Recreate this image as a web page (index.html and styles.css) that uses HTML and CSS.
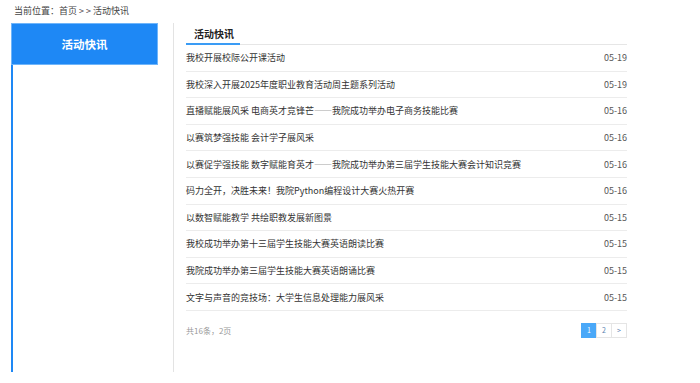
FILE: index.html
```html
<!DOCTYPE html>
<html lang="zh">
<head>
<meta charset="utf-8">
<link rel="stylesheet" href="styles.css">
</head>
<body>
<div class="wrap">
  <div class="crumb">当前位置：<a>首页</a> &gt; &gt; <a>活动快讯</a></div>
  <div class="content">
    <aside class="side">
      <div class="side-head">活动快讯</div>
    </aside>
    <main class="main">
      <div class="tabs"><span class="tab">活动快讯</span></div>
      <ul class="list">
        <li><span class="t">我校开展校际公开课活动</span><span class="d">05-19</span></li>
        <li><span class="t">我校深入开展2025年度职业教育活动周主题系列活动</span><span class="d">05-19</span></li>
        <li><span class="t">直播赋能展风采 电商英才竞锋芒——我院成功举办电子商务技能比赛</span><span class="d">05-16</span></li>
        <li><span class="t">以赛筑梦强技能 会计学子展风采</span><span class="d">05-16</span></li>
        <li><span class="t">以赛促学强技能 数字赋能育英才——我院成功举办第三届学生技能大赛会计知识竞赛</span><span class="d">05-16</span></li>
        <li><span class="t">码力全开，决胜未来！我院Python编程设计大赛火热开赛</span><span class="d">05-16</span></li>
        <li><span class="t">以数智赋能教学 共绘职教发展新图景</span><span class="d">05-15</span></li>
        <li><span class="t">我校成功举办第十三届学生技能大赛英语朗读比赛</span><span class="d">05-15</span></li>
        <li><span class="t">我院成功举办第三届学生技能大赛英语朗诵比赛</span><span class="d">05-15</span></li>
        <li><span class="t">文字与声音的竞技场：大学生信息处理能力展风采</span><span class="d">05-15</span></li>
      </ul>
      <div class="foot">
        <span class="total">共16条，2页</span>
        <div class="pager">
          <span class="pg on">1</span><span class="pg">2</span><span class="pg">&gt;</span>
        </div>
      </div>
    </main>
  </div>
</div>
</body>
</html>
```

FILE: styles.css
```css
* { box-sizing: border-box; }
html, body { margin: 0; padding: 0; background: #fff; }
body {
  font-family: "Noto Sans CJK SC", "Noto Sans", sans-serif;
  color: #333;
  font-size: 9px;
}
.wrap { padding-left: 11px; width: 627px; }
.crumb {
  height: 23px;
  line-height: 21px;
  padding-left: 3px;
  color: #444;
  font-size: 9px;
}
.content { display: flex; height: 349px; }
.side {
  width: 147px;
  flex: none;
  border-left: 2px solid #1e88f5;
}
.side-head {
  height: 42px;
  margin-left: -2px;
  background: #1e88f5;
  box-shadow: 0 0 0 1px #6fb5fa inset;
  color: #fff;
  font-weight: bold;
  font-size: 11.5px;
  display: flex;
  align-items: center;
  justify-content: center;
}
.main {
  flex: 1;
  margin-left: 15px;
  border-left: 1px solid #e3e3e3;
  padding-left: 12px;
}
.tabs {
  height: 22px;
  border-bottom: 1px solid #e6e6e6;
  display: flex;
  align-items: flex-end;
}
.tab {
  width: 54px;
  padding-left: 8px;
  font-weight: bold;
  font-size: 10px;
  color: #222;
  line-height: 19px;
  border-bottom: 2px solid #3a9cf5;
  margin-bottom: -1px;
}
.list { list-style: none; margin: 0; padding: 0; }
.list li {
  height: 26.6px;
  border-bottom: 1px solid #ececec;
  display: flex;
  align-items: center;
  justify-content: space-between;
  color: #333;
}
.list .d { color: #555; }
.foot {
  display: flex;
  justify-content: space-between;
  align-items: center;
  margin-top: 12px;
  height: 15px;
}
.total { color: #999; font-size: 8px; }
.pager { display: flex; }
.pg {
  width: 16px;
  height: 15px;
  border: 1px solid #e5e5e5;
  margin-left: -1px;
  display: flex;
  align-items: center;
  justify-content: center;
  color: #5a7fb0;
  font-size: 7px;
}
.pg.on { background: #4aa8f8; border-color: #4aa8f8; color: #fff; }
```
